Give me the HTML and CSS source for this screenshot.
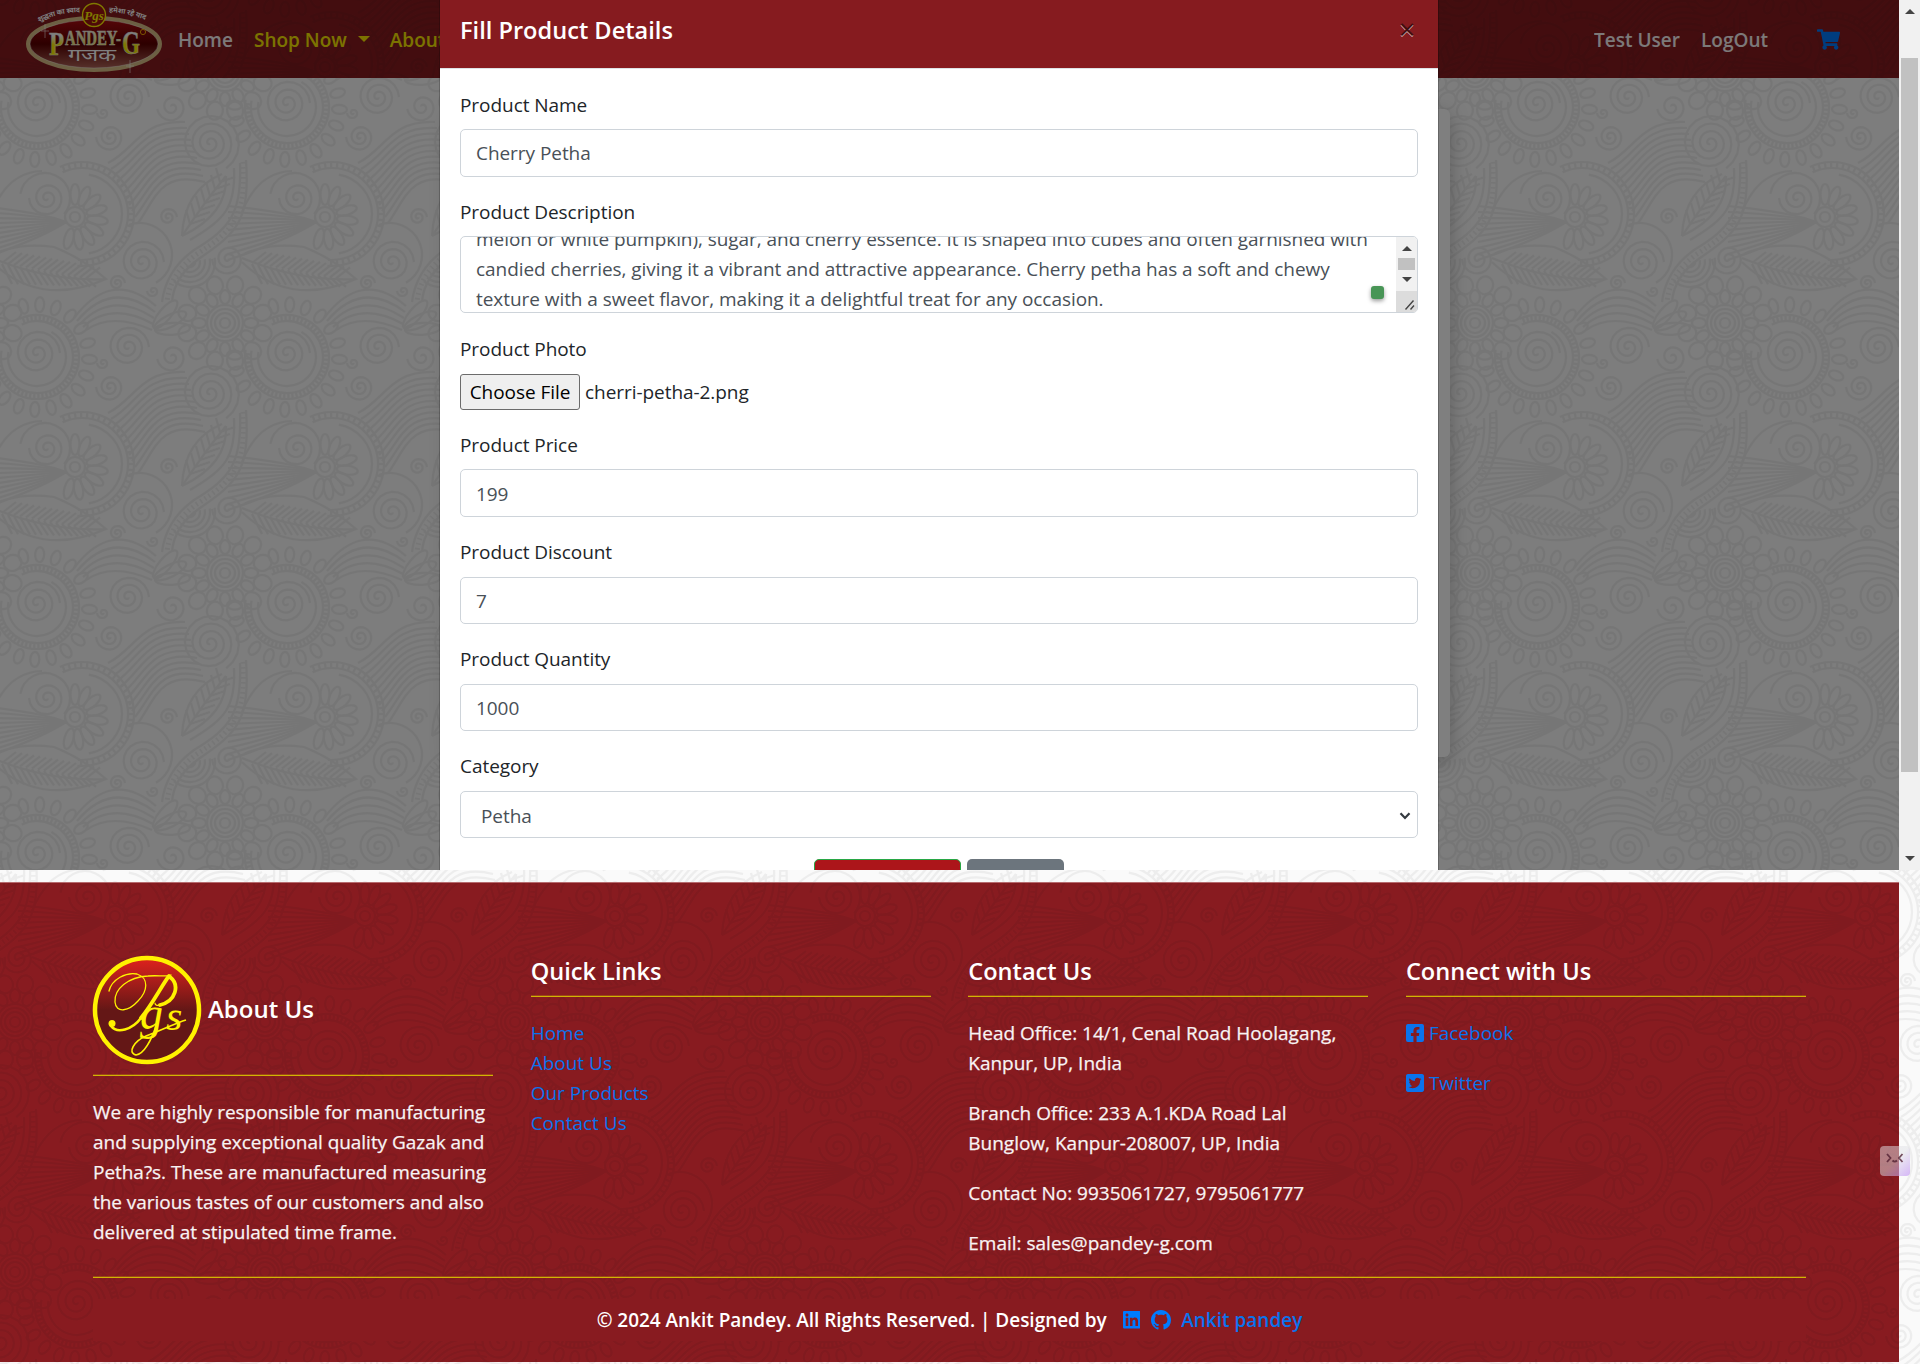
FILE: index.html
```html
<!DOCTYPE html>
<html lang="en">
<head>
<meta charset="utf-8">
<title>Pandey-G</title>
<link rel="stylesheet" href="styles.css">
</head>
<body>
<div class="stage">
  <div class="page">
    <nav class="navbar">
      <svg class="brand" viewBox="0 0 140 78" width="140" height="78">
        <defs>
          <linearGradient id="oval" x1="0" y1="0" x2="0" y2="1">
            <stop offset="0" stop-color="#b00d12"/><stop offset=".5" stop-color="#5a0000"/><stop offset="1" stop-color="#b4685c"/>
          </linearGradient>
          <linearGradient id="letters" x1="0" y1="0" x2="0" y2="1">
            <stop offset="0" stop-color="#fff"/><stop offset="1" stop-color="#f6ec3c"/>
          </linearGradient>
          <linearGradient id="gold" x1="0" y1="0" x2="0" y2="1">
            <stop offset="0" stop-color="#fff"/><stop offset=".3" stop-color="#fff"/><stop offset=".55" stop-color="#fff200"/><stop offset="1" stop-color="#fff200"/>
          </linearGradient>
          <path id="sloganL" d="M15 22Q36 12 58 12"/>
          <path id="sloganR" d="M85 12Q106 13 124 21"/>
        </defs>
        <ellipse cx="70" cy="44" rx="66" ry="26" fill="url(#oval)" stroke="#d9bf86" stroke-width="4"/>
        <ellipse cx="70" cy="44" rx="64" ry="24" fill="none" stroke="#fff" stroke-width="1" opacity=".4"/>
        <text class="slogan"><textPath href="#sloganL">शुद्धता का स्वाद</textPath></text>
        <text class="slogan"><textPath href="#sloganR">हमेशा रहे याद</textPath></text>
        <circle cx="70" cy="15" r="11.500" fill="#9c1410" stroke="#fff200" stroke-width="1.400"/>
        <text class="mini" x="70" y="20" text-anchor="middle">Pgs</text>
        <text class="wordmark big" x="25" y="54.500" textLength="15" lengthAdjust="spacingAndGlyphs">P</text>
        <text class="wordmark" x="41" y="45" textLength="56" lengthAdjust="spacingAndGlyphs">ANDEY-</text>
        <text class="wordmark big" x="98" y="54" textLength="18" lengthAdjust="spacingAndGlyphs">G</text>
        <circle cx="119" cy="32" r="2.600" fill="none" stroke="#f2a600" stroke-width="1"/>
        <text class="hindi" x="68" y="61" text-anchor="middle" textLength="48" lengthAdjust="spacingAndGlyphs">गजक</text>
        <path d="M21 24v14M17 31h8M106 60v13M102 66h8" stroke="#fff" stroke-width=".7" opacity=".8"/>
      </svg>
      <a class="nav-link">Home</a>
      <a class="nav-link hot">Shop Now<i class="caret"></i></a>
      <a class="nav-link hot">About Us</a>
      <div class="nav-right">
        <a class="nav-link">Test User</a>
        <a class="nav-link">LogOut</a>
        <svg class="cart" viewBox="0 0 576 512" width="23" height="21"><path fill="#007bff" d="M528.12 301.319l47.273-208C578.806 78.301 567.391 64 551.99 64H159.208l-9.166-44.81C147.758 8.021 137.93 0 126.529 0H24C10.745 0 0 10.745 0 24v16c0 13.255 10.745 24 24 24h69.883l70.248 343.435C147.325 417.1 136 435.222 136 456c0 30.928 25.072 56 56 56s56-25.072 56-56c0-15.674-6.447-29.835-16.824-40h209.647C430.447 426.165 424 440.326 424 456c0 30.928 25.072 56 56 56s56-25.072 56-56c0-22.172-12.888-41.332-31.579-50.405l5.517-24.276c3.413-15.018-8.002-29.319-23.403-29.319H218.117l-6.545-32h293.145c11.206 0 20.92-7.754 23.403-18.681z"/></svg>
      </div>
    </nav>
    <div class="card"></div>
  </div>
  <div class="backdrop">
    <div class="modal">
      <header class="modal-header"><h5>Fill Product Details</h5><span class="close">×</span></header>
      <div class="modal-body">
        <div class="group"><label>Product Name</label><div class="field">Cherry Petha</div></div>
        <div class="group"><label>Product Description</label>
          <div class="area">
            <div class="area-text">melon or white pumpkin), sugar, and cherry essence. It is shaped into cubes and often garnished with<br>candied cherries, giving it a vibrant and attractive appearance. Cherry petha has a soft and chewy<br>texture with a sweet flavor, making it a delightful treat for any occasion.</div>
            <div class="area-bar"><i class="up"></i><i class="thumb"></i><i class="down"></i>
              <svg class="grip" viewBox="0 0 21 21" width="21" height="21"><path d="M9.500 18.500l8-9M14.500 18.500l3.500-4" stroke="#444" stroke-width="1.400"/></svg></div>
            <i class="checker"></i>
          </div>
        </div>
        <div class="group"><label>Product Photo</label><div class="file"><span class="file-btn">Choose File</span><span>cherri-petha-2.png</span></div></div>
        <div class="group"><label>Product Price</label><div class="field low">199</div></div>
        <div class="group"><label>Product Discount</label><div class="field low">7</div></div>
        <div class="group"><label>Product Quantity</label><div class="field low">1000</div></div>
        <div class="group"><label>Category</label><div class="field select low">Petha<svg viewBox="0 0 12 8" width="12" height="8"><path d="M1.500 1.200L6 6l4.500-4.800" fill="none" stroke="#343a40" stroke-width="2.200"/></svg></div></div>
        <div class="actions"><span class="btn save"></span><span class="btn shut"></span></div>
      </div>
    </div>
  </div>
  <div class="scrollbar"><i class="up"></i><i class="track-thumb"></i><i class="down"></i></div>
</div>

<footer class="footer">
  <div class="cols">
    <section class="about">
      <div class="about-head">
        <svg viewBox="0 0 110 110" width="110" height="110">
          <defs><linearGradient id="disc" x1="0" y1="0" x2="0" y2="1"><stop offset="0" stop-color="#df221d"/><stop offset=".1" stop-color="#c8201c"/><stop offset=".5" stop-color="#641716"/><stop offset="1" stop-color="#641716"/></linearGradient></defs>
          <circle cx="55" cy="55" r="52" fill="url(#disc)" stroke="#fff200" stroke-width="4.500"/>
          <g fill="none" stroke="#fff200" stroke-linecap="round">
            <path stroke-width="1.300" d="M17 36C20 24 34 17 45 19C57 23 56 36 46 46C37 56 24 59 23 47C22 34 36 22 56 21C66 20 74 22 79 20"/>
            <path stroke-width="3.800" d="M78 22C88 30 84 46 68 50M77 21C70 30 60 50 49 63"/>
            <path stroke-width="2.600" d="M49 63C40 75 25 79 19 71"/>
            <path stroke-width="1.200" d="M68 50C65 51 63 50 63 48"/>
          </g>
          <circle cx="20" cy="68.500" r="3.500" fill="#fff200"/>
          <text class="mono" x="48" y="74" font-size="46">g</text>
          <text class="mono" x="74" y="75" font-size="42">s</text>
          <path fill="none" stroke="#fff200" stroke-width="1.700" d="M66 66C60 84 52 99 44 100C35 98 42 86 54 81C70 75 84 68 94 65"/>
        </svg>
        <h4>About Us</h4>
      </div>
      <hr>
      <p>We are highly responsible for manufacturing<br>and supplying exceptional quality Gazak and<br>Petha?s. These are manufactured measuring<br>the various tastes of our customers and also<br>delivered at stipulated time frame.</p>
    </section>
    <section>
      <h4>Quick Links</h4><hr>
      <ul><li><a>Home</a></li><li><a>About Us</a></li><li><a>Our Products</a></li><li><a>Contact Us</a></li></ul>
    </section>
    <section>
      <h4>Contact Us</h4><hr>
      <p>Head Office: 14/1, Cenal Road Hoolagang,<br>Kanpur, UP, India</p>
      <p>Branch Office: 233 A.1.KDA Road Lal<br>Bunglow, Kanpur-208007, UP, India</p>
      <p>Contact No: 9935061727, 9795061777</p>
      <p>Email: sales@pandey-g.com</p>
    </section>
    <section>
      <h4>Connect with Us</h4><hr>
      <a class="social"><svg viewBox="0 32 448 448" width="18" height="18"><path d="M400 32H48A48 48 0 0 0 0 80v352a48 48 0 0 0 48 48h137.25V327.69h-63V256h63v-54.64c0-62.15 37-96.48 93.67-96.48 27.14 0 55.52 4.84 55.52 4.84v61h-31.27c-30.81 0-40.42 19.12-40.42 38.73V256h68.78l-11 71.69h-57.78V480H400a48 48 0 0 0 48-48V80a48 48 0 0 0-48-48z"/></svg>Facebook</a>
      <a class="social"><svg viewBox="0 32 448 448" width="18" height="18"><path d="M400 32H48C21.5 32 0 53.5 0 80v352c0 26.5 21.5 48 48 48h352c26.5 0 48-21.5 48-48V80c0-26.5-21.5-48-48-48zm-48.9 158.8c.2 2.8.2 5.7.2 8.500 0 86.700-66 186.600-186.600 186.600-37.200 0-71.700-10.800-100.700-29.400 5.300.6 10.400.8 15.800.8 30.700 0 58.900-10.400 81.400-28-28.800-.6-53-19.500-61.300-45.500 10.100 1.500 19.200 1.500 29.600-1.200-30-6.100-52.500-32.500-52.500-64.400v-.8c8.700 4.900 18.900 7.900 29.600 8.300a65.447 65.447 0 0 1-29.200-54.600c0-12.200 3.200-23.400 8.900-33.100 32.300 39.800 80.800 65.800 135.200 68.600-9.300-44.500 24-80.600 64-80.600 18.900 0 35.900 7.900 47.900 20.700 14.800-2.800 29-8.300 41.600-15.800-4.900 15.200-15.200 28-28.800 36.100 13.200-1.400 26-5.100 37.800-10.200-8.900 13.100-20.100 24.700-32.900 34z"/></svg>Twitter</a>
    </section>
  </div>
  <hr class="wide">
  <div class="copy">
    <span>© 2024 Ankit Pandey. All Rights Reserved. | Designed by</span>
    <svg class="in" viewBox="0 32 448 448" width="17.500" height="17.500"><path d="M416 32H31.9C14.3 32 0 46.5 0 64.3v383.4C0 465.5 14.3 480 31.9 480H416c17.6 0 32-14.5 32-32.3V64.3c0-17.8-14.4-32.3-32-32.3zM135.4 416H69V202.2h66.5V416zm-33.2-243c-21.3 0-38.5-17.3-38.5-38.5S80.9 96 102.2 96c21.2 0 38.5 17.3 38.5 38.5 0 21.3-17.2 38.5-38.5 38.5zm282.1 243h-66.4V312c0-24.8-.5-56.7-34.5-56.7-34.6 0-39.9 27-39.9 54.9V416h-66.4V202.2h63.7v29.2h.9c8.9-16.8 30.6-34.5 62.9-34.5 67.2 0 79.700 44.300 79.700 101.900V416z"/></svg>
    <svg class="gh" viewBox="0 0 16 16" width="20" height="20"><path d="M8 0C3.58 0 0 3.58 0 8c0 3.54 2.29 6.53 5.47 7.59.4.07.55-.17.55-.38 0-.19-.01-.82-.01-1.49-2.01.37-2.53-.49-2.69-.94-.09-.23-.48-.94-.82-1.13-.28-.15-.68-.52-.01-.53.63-.01 1.08.58 1.23.82.72 1.21 1.87.87 2.33.66.07-.52.28-.87.51-1.07-1.78-.2-3.64-.89-3.64-3.95 0-.87.31-1.59.82-2.15-.08-.2-.36-1.02.08-2.12 0 0 .67-.21 2.2.82.64-.18 1.32-.27 2-.27.68 0 1.36.09 2 .27 1.53-1.04 2.2-.82 2.2-.82.44 1.1.16 1.92.08 2.12.51.56.82 1.27.82 2.15 0 3.07-1.87 3.75-3.65 3.95.29.25.54.73.54 1.48 0 1.07-.01 1.93-.01 2.2 0 .21.15.46.55.38A8.013 8.013 0 0016 8c0-4.42-3.58-8-8-8z"/></svg>
    <a>Ankit pandey</a>
  </div>
</footer>
<div class="helper"><svg viewBox="0 0 30 30" width="30" height="30"><path d="M7 8l3.500 4L7 16M22.500 8L19 12l3.500 4M12.500 14.500q2.200 2.200 4.500 0" fill="none" stroke="#4b1a2c" stroke-width="1.800" opacity=".75"/></svg></div>
<script src="paisley.js"></script>
</body>
</html>
```
FILE: styles.css
```css
* { box-sizing: border-box; }
body {
  margin: 0;
  width: 1920px;
  height: 1364px;
  overflow: hidden;
  position: relative;
  font: 400 19px/30px "Open Sans", "Noto Sans", sans-serif;
  color: #212529;
  background: #fafafa var(--paisley-light) 40px -52px;
}
h4, h5, p, ul { margin: 0; padding: 0; font-weight: 600; }
ul { list-style: none; }
i { display: block; }

.stage { position: relative; height: 870px; overflow: hidden; margin-bottom: 12px; }
.page { width: 1899px; height: 870px; background: #fafafa var(--paisley-light) 0 0; overflow: hidden; }

.navbar {
  height: 78px;
  display: flex;
  align-items: center;
  background: #861b1f var(--paisley-dark) 0 100px;
}
.brand { margin-left: 24px; margin-right: 14px; flex: none; }
.slogan { font: 700 7px "Noto Sans", sans-serif; fill: #fff; }
.mini { font: italic 700 13px "Liberation Serif", serif; fill: #fff200; }
.wordmark { font: 700 20px "Liberation Serif", serif; fill: url(#letters); stroke: #eee; stroke-width: .5; }
.wordmark.big { font-size: 34px; fill: url(#gold); }
.hindi { font: 400 17px "Noto Sans", sans-serif; fill: #fff; }
.nav-link { font-size: 19px; font-weight: 600; color: #fff; opacity: .95; margin-right: 20px; padding-top: 2px; display: flex; align-items: center; white-space: nowrap; }
.nav-link:first-of-type { margin-right: 21px; }
.nav-link.hot { color: #fff200; }
.caret { margin-left: 11px; margin-top: -2px; border: 6px solid transparent; border-top-color: #fff200; border-bottom: 0; }
.nav-right { margin-left: auto; display: flex; align-items: center; padding-right: 59px; }
.cart { margin-left: 29px; }
.card { width: 1000px; height: 648px; margin: 31px auto 0; background: #fff; border-radius: 6px; box-shadow: 0 5px 20px rgba(0,0,0,.25); }

.backdrop { position: absolute; inset: 0 21px 0 0; background: rgba(0,0,0,.5); display: flex; justify-content: center; align-items: flex-start; overflow: hidden; }
.modal { width: 998px; height: 900px; flex: none; margin-right: 21px; background: #fff; box-shadow: 0 0 0 1px rgba(0,0,0,.2); }
.modal-header { height: 69px; padding: 0 20px 8px; background: #861b1f; border-bottom: 1px solid #dee2e6; display: flex; justify-content: space-between; align-items: center; color: #fff; }
.modal-header h5 { font-size: 23.600px; line-height: 30px; }
.close { font-size: 29px; line-height: 26px; width: 22px; margin-top: -3px; text-align: center; color: #400d0f; text-shadow: 0 1px 0 #d9bcbd; }
.modal-body { padding: 20.800px 20px 0; letter-spacing: -.055px; }
.group { margin-bottom: 20.200px; }
.group label { display: block; height: 30px; margin-bottom: 9.500px; }
.field { height: 47.500px; border: 1px solid #ced4da; border-radius: 5px; padding: 0 15px; display: flex; align-items: center; color: #495057; background: #fff; }
.low { padding-top: 2px; }
.select { padding: 2px 6px 0 20px; justify-content: space-between; }
.area { position: relative; height: 77px; border: 1px solid #ced4da; border-radius: 5px; overflow: hidden; display: flex; justify-content: space-between; color: #495057; }
.area-text { margin: -13px 0 0 15px; white-space: nowrap; }
.area-bar { width: 21px; background: #f1f1f1; display: flex; flex-direction: column; align-items: center; flex: none; }
.up, .down { border: 5px solid transparent; width: 0; height: 0; }
.up { border-bottom-color: #444; border-top: 0; }
.down { border-top-color: #444; border-bottom: 0; }
.area-bar .up { margin-top: 9px; }
.area-bar .thumb { width: 17px; height: 12px; margin: 7px 0; background: #c1c1c1; }
.grip { margin-top: auto; background: #dcdcdc; }
.checker { position: absolute; right: 33px; bottom: 13px; width: 13px; height: 13px; border-radius: 3px; background: #489556; box-shadow: 0 2px 4px rgba(0,0,0,.4); }
.file { display: flex; align-items: center; gap: 5px; height: 36.500px; padding-top: 1px; }
.file-btn { height: 36px; line-height: 35px; width: 120px; text-align: center; border: 1px solid #6b6b6b; border-radius: 3px; background: #efefef; color: #000; }
.actions { display: flex; justify-content: center; gap: 6px; }
.btn { height: 47px; border-radius: 5px; }
.save { width: 147px; background: #ac151a; border: 1px solid #28a745; }
.shut { width: 97px; background: #6c757d; }

.scrollbar { position: absolute; top: 0; right: 0; width: 21px; height: 870px; background: #f1f1f1; display: flex; flex-direction: column; align-items: center; }
.scrollbar .up { margin-top: 9px; }
.track-thumb { width: 17px; height: 714px; margin-top: 44px; background: #c1c1c1; }
.scrollbar .down { margin-top: 84px; }

.footer { width: 1899px; height: 480px; padding: 74px 93px 0; color: #fff; background: #881b20 var(--paisley-dark) 40px 66px; border-top: 1px solid #b56a6d; }
.cols { display: grid; grid-template-columns: repeat(4, 1fr); column-gap: 37.500px; height: 320px; }
.footer h4 { font-size: 23.600px; line-height: 29px; }
.footer hr { margin: 10px 0 21px; border: 0; height: 1px; background: #d2b404; box-shadow: 0 -1px 0 rgba(205,175,4,.3); }
.footer p { font-weight: 500; -webkit-text-stroke: .25px #fff; opacity: .95; margin-bottom: 20px; white-space: nowrap; }
.footer a { color: #007bff; opacity: .92; font-weight: 400; }
.about { margin-top: -2px; }
.about p { letter-spacing: -.04px; }
.about-head { display: flex; align-items: center; gap: 6px; height: 110px; }
.about-head svg { flex: none; margin-left: -1px; }
.about-head h4 { margin-top: -4px; font-size: 24px; }
.mono { font-family: "Liberation Serif", serif; font-style: italic; fill: #fff200; }
.social { display: flex; align-items: center; gap: 5px; margin-bottom: 20px; }
.footer svg path:only-child { fill: #007bff; }
.footer hr.wide { margin: 0 0 21px; }
.copy { height: 42px; background: #881b20; display: flex; align-items: center; justify-content: center; font-weight: 600; white-space: nowrap; }
.copy span { letter-spacing: -.03px; }
.copy a { font-weight: 600; }
.in { margin: 0 11px 0 16px; }
.gh { margin-right: 10px; }

.helper { position: absolute; left: 1880px; top: 1146px; width: 30px; height: 30px; border-radius: 4px; background: linear-gradient(135deg, rgba(225,225,230,.5) 50%, rgba(190,140,245,.62)); }
.helper svg { display: block; }
```
FILE: paisley.js
```js
// Builds the 250px paisley tile used behind the page, navbar and footer.
(function () {
  var T = 250, out = [];
  function f(n) { return n.toFixed(1); }
  function path(d) { out.push('<path d="' + d + '"/>'); }
  function circle(x, y, r) { out.push('<circle cx="' + x + '" cy="' + y + '" r="' + r + '"/>'); }
  function spiral(x, y, R, turns, start, dir) {
    var d = '', n = turns * 20;
    for (var i = 2; i <= n; i++) {
      var a = start + dir * i / 20 * Math.PI * 2, r = R * i / n;
      d += (i === 2 ? 'M' : 'L') + f(x + r * Math.cos(a)) + ' ' + f(y + r * Math.sin(a));
    }
    path(d);
  }
  function petals(x, y, n, r1, r2, w, from, to) {
    for (var i = 0; i < n; i++) {
      var a = from + (to - from) * i / n;
      out.push('<ellipse cx="' + f((r1 + r2) / 2) + '" cy="0" rx="' + (r2 - r1) / 2 + '" ry="' + w +
        '" transform="translate(' + x + ' ' + y + ') rotate(' + f(a) + ')"/>');
    }
  }
  function arc(x, y, r, a1, a2) {
    var p = Math.PI / 180;
    path('M' + f(x + r * Math.cos(a1 * p)) + ' ' + f(y + r * Math.sin(a1 * p)) + 'A' + r + ' ' + r + ' 0 ' +
      (a2 - a1 > 180 ? 1 : 0) + ' 1 ' + f(x + r * Math.cos(a2 * p)) + ' ' + f(y + r * Math.sin(a2 * p)));
  }
  function beads(x, y, r1, r2, a1, a2, step) {
    for (var a = a1; a < a2; a += step) {
      var c = Math.cos(a * Math.PI / 180), s = Math.sin(a * Math.PI / 180);
      path('M' + f(x + r1 * c) + ' ' + f(y + r1 * s) + 'L' + f(x + r2 * c) + ' ' + f(y + r2 * s));
    }
  }
  var i;
  // daisy with a beaded ring
  circle(75, 217, 5); circle(75, 217, 10);
  petals(75, 217, 9, 12, 33, 4.5, -90, 130);
  arc(82, 214, 52, -115, 95); arc(82, 214, 46, -115, 95); arc(82, 214, 40, -80, 80);
  beads(82, 214, 46, 52, -112, 95, 7);
  // fan beside the daisy
  for (i = 0; i < 10; i++) path('M66 222Q40 ' + (212 + i * 3) + ' -22 ' + (206 + i * 6));
  // scrolls
  spiral(47, 198, 18, 2.5, 0, 1); arc(45, 198, 25, 190, 400); path('M-8 212Q8 172 42 171');
  spiral(142, 262, 22, 3, 0, 1); arc(140, 255, 32, -110, 60);
  spiral(210, 143, 30, 4, 1, 1);
  spiral(110, 137, 14, 2.5, 0, 1);
  spiral(168, 217, 9, 2, 0, 1);
  spiral(117, 283, 8, 2, 0, 1);
  spiral(228, 259, 16, 2.5, 0, 1);
  spiral(172, 357, 15, 2, 3, 1);
  spiral(153, 291, 6, 1.5, 0, 1);
  spiral(103, 363, 6, 1.5, 0, 1);
  // large shell
  spiral(37, 353, 23, 3, 0, 1);
  arc(37, 357, 29, -60, 190); arc(37, 357, 36, -115, 190); arc(37, 357, 42, -115, 190);
  beads(37, 357, 36, 42, -110, 190, 6);
  petals(37, 357, 17, 45, 60, 4.5, -105, 200);
  // small shell with arched bands
  spiral(128, 347, 21, 3, 0, 1);
  for (i = 0; i < 5; i++) path('M' + (74 + i * 3) + ' ' + (318 + i * 3) + 'Q' + 112 + ' ' + (268 + i * 11) + ' ' + (156 - i) + ' ' + (306 + i * 6));
  // rosette
  circle(225, 323, 5); circle(225, 323, 10); circle(225, 323, 18); circle(225, 323, 14);
  petals(225, 323, 12, 19, 33, 5, 0, 360); petals(225, 323, 12, 30, 48, 8, 15, 375);
  // flowing ribbons
  for (i = 0; i < 11; i++) path('M' + (108 + i * 3) + ' ' + (163 + i * 6) + 'C' + (135 + i * 2) + ' ' + (150 + i * 5) + ' ' + (140 + i * 2) + ' ' + (120 + i * 5) + ' ' + (185 + i * 2) + ' ' + (122 + i * 6));
  // upright leaf
  path('M182 236Q184 190 222 174M182 236Q228 214 226 176M182 236Q206 200 226 176');
  for (i = 0; i < 7; i++) path('M' + (190 + i * 5) + ' ' + (224 - i * 7) + 'l-4 -14M' + (190 + i * 5) + ' ' + (224 - i * 7) + 'l15 -5');
  // beaded stem
  ['M246 160C250 220 238 232 200 258Q174 276 172 302', 'M240 163C242 214 230 228 194 250Q166 270 162 302', 'M234 168C236 208 224 220 190 240'].forEach(path);
  out.push('<path stroke-dasharray="1.6 3.4" stroke-width="5" d="M243 162C246 217 234 230 197 254Q170 273 167 302"/>');
  // reclining leaf
  path('M-6 254Q20 242 54 247Q82 258 106 279Q40 308 -8 262M-8 258Q50 282 106 279');
  for (i = 0; i < 15; i++) path('M' + (2 + i * 6) + ' ' + f(263 + i * 1.1) + 'l14 -11M' + (2 + i * 6) + ' ' + f(264 + i) + 'l10 ' + f(20 - i * .8));
  // hatching and buds
  for (i = 0; i < 5; i++) arc(190, 262, 5 + i * 5, -10, 130);
  petals(152, 330, 3, 3, 38, 6, -50, 20);

  var g = '<g id="m">' + out.join('') + '</g>', uses = '';
  [-T, 0, T].forEach(function (x) { [-2 * T, -T, 0, T].forEach(function (y) { if (x || y) uses += '<use href="#m" x="' + x + '" y="' + y + '"/>'; }); });
  function tile(color, o) {
    var svg = '<svg xmlns="http://www.w3.org/2000/svg" width="250" height="250"><g fill="none" stroke="' + color +
      '" stroke-width="2.2" opacity="' + o + '">' + g + uses + '</g></svg>';
    return 'url("data:image/svg+xml,' + encodeURIComponent(svg) + '")';
  }
  document.documentElement.style.setProperty('--paisley-light', tile('#000', '.05'));
  document.documentElement.style.setProperty('--paisley-dark', tile('#4a0a10', '.13'));
})();
```
